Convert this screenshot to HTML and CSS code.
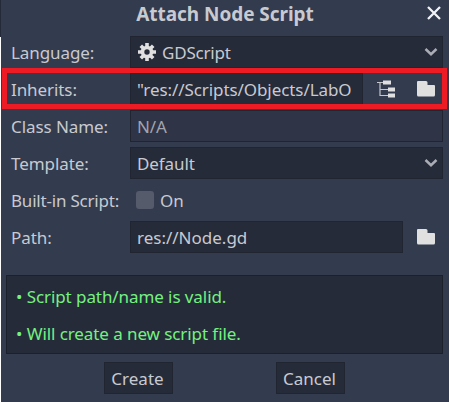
FILE: index.html
```html
<!DOCTYPE html>
<html lang="en">
<head>
<meta charset="utf-8">
<title>Attach Node Script</title>
<link rel="stylesheet" href="styles.css">
</head>
<body>
<main class="dialog">
  <header class="titlebar">
    <h1 class="title">Attach Node Script</h1>
    <svg class="close" width="16" height="16" viewBox="0 0 16 16"><path d="M2 2l12 12M14 2L2 14"/></svg>
  </header>
  <div class="form">
    <div class="row">
      <span class="label">Language:</span>
      <div class="field select">
        <svg class="gear" width="18" height="18" viewBox="-9 -9 18 18"><circle r="4.5"/><path d="M0-9V-5M0 5V9M-9 0H-5M5 0H9M-6.2-6.2l2.8 2.8M3.4 3.4l2.8 2.8M6.2-6.2L3.4-3.4M-3.4 3.4l-2.8 2.8"/></svg>
        <span class="text tight">GDScript</span>
        <svg class="arrow" width="14" height="10" viewBox="0 0 14 10"><path d="M1.5 2L7 7.2L12.5 2"/></svg>
      </div>
    </div>
    <div class="row">
      <span class="label">Inherits:</span>
      <div class="field inherits"><span class="text">"res://Scripts/Objects/LabO</span></div>
      <button class="icon-button tree-button" aria-label="Select class"><svg width="18" height="18" viewBox="0 0 18 18"><path class="line" d="M0 2.5H8M3 2V15.5H12M3 9.500H12"/><path d="M6 .5h8v4H6zM11 7.500h7v4h-7zM11 13.500h7v4h-7z"/></svg></button>
      <button class="icon-button" aria-label="Browse"><svg width="18" height="16" viewBox="0 0 18 16"><path d="M1 0H9Q10.500 0 10.500 1.500V4H17Q18 4 18 5V14Q18 15.500 16.500 15.500H1.500Q0 15.500 0 14V1Q0 0 1 0Z"/></svg></button>
    </div>
    <div class="row">
      <span class="label">Class Name:</span>
      <div class="field disabled"><span class="text">N/A</span></div>
    </div>
    <div class="row">
      <span class="label">Template:</span>
      <div class="field select"><span class="text">Default</span>
        <svg class="arrow" width="14" height="10" viewBox="0 0 14 10"><path d="M1.5 2L7 7.2L12.5 2"/></svg>
      </div>
    </div>
    <div class="row">
      <span class="label tight">Built-in Script:</span>
      <span class="checkbox"></span><span class="text">On</span>
    </div>
    <div class="row">
      <span class="label">Path:</span>
      <div class="field"><span class="text loose">res://Node.gd</span></div>
      <button class="icon-button" aria-label="Browse"><svg width="18" height="16" viewBox="0 0 18 16"><path d="M1 0H9Q10.500 0 10.500 1.500V4H17Q18 4 18 5V14Q18 15.500 16.500 15.500H1.500Q0 15.500 0 14V1Q0 0 1 0Z"/></svg></button>
    </div>
  </div>
  <div class="status">
    <p class="message">• Script path/name is valid.</p>
    <p class="message">• Will create a new script file.</p>
  </div>
  <footer class="actions">
    <button class="action">Create</button>
    <button class="action">Cancel</button>
  </footer>
  <div class="highlight"></div>
</main>
</body>
</html>
```
FILE: styles.css
```css
* { box-sizing: border-box; }
body {
  margin: 0;
  width: 449px;
  height: 402px;
  overflow: hidden;
  background: linear-gradient(#252a38 37px, #fff 37px);
  font: 17px/32px "Noto Sans", sans-serif;
  letter-spacing: -0.08px;
  color: #c8cacf;
}
.dialog {
  position: relative;
  height: 402px;
  margin-left: 1px;
  background: #333b4f;
}
.titlebar {
  display: flex;
  align-items: center;
  justify-content: center;
  height: 36px;
  padding-bottom: 8px;
}
.title {
  margin: 0;
  font-size: 19px;
  font-weight: 700;
  line-height: 28px;
  letter-spacing: -0.05px;
}
.close {
  position: absolute;
  right: 7px;
  top: 5px;
  fill: none;
  stroke: #f2f3f5;
  stroke-width: 2.3;
}
.form {
  display: grid;
  gap: 5px;
  padding: 0 6px 0 10px;
}
.row { display: flex; height: 32px; align-items: center; }
.label { width: 119px; flex: none; }
.label, .text { position: relative; top: 1px; white-space: nowrap; }
.tight { letter-spacing: -0.2px; }
.loose { letter-spacing: 0; }
.field {
  display: flex;
  align-items: center;
  flex: 1;
  height: 32px;
  padding: 0 4px 0 6px;
  border: 1px solid #202531;
  background: #262b3a;
}
.inherits { flex: none; width: 233px; }
.disabled { background: #2f3446; color: #a2a5ae; }
.arrow {
  margin-left: auto;
  fill: none;
  stroke: #aaadb4;
  stroke-width: 2.5;
}
.gear { margin: 0 6px 0 1px; fill: none; stroke: #e0e0e0; stroke-width: 3.6; }
.icon-button {
  display: grid;
  place-items: center;
  width: 40px;
  height: 32px;
  padding: 0 0 0 5px;
  border: 0;
  background: none;
  fill: #e0e0e0;
}
.tree-button { padding: 0 0 1px 6px; }
.line { fill: none; stroke: #c4c6ca; stroke-width: 1.2; }
.checkbox {
  width: 18px;
  height: 18px;
  margin: 0 6px;
  border-radius: 3px;
  background: #555b6b;
}
.status {
  height: 79px;
  margin: 22px 6px 0 5px;
  padding: 5px 9px;
  border: 1px solid #1b202b;
  background: #262b3a;
  color: #73f280;
}
.message { margin: 0 0 5px; }
.actions {
  display: flex;
  gap: 103px;
  margin: 8px 0 0 103px;
}
.action {
  width: 69px;
  height: 32px;
  padding: 2px 2px 0 0;
  border: 1px solid #202531;
  background: #262b3a;
  color: inherit;
  font: inherit;
  letter-spacing: 0;
  line-height: 28px;
}
.highlight {
  position: absolute;
  left: 1px;
  top: 68px;
  width: 445px;
  height: 41px;
  border: 5px solid #ed1c24;
}
```
